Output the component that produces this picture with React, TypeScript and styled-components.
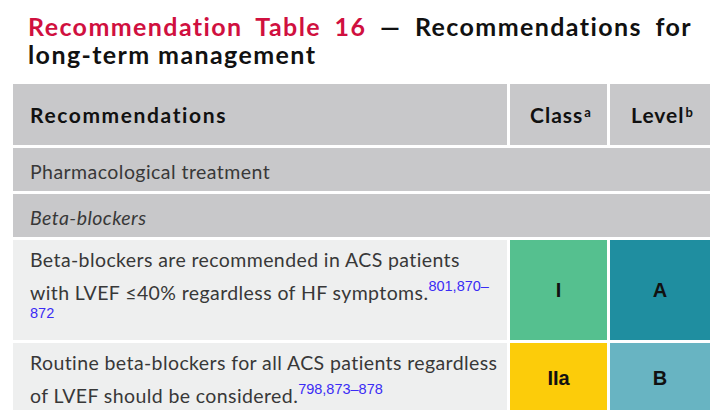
import React from "react";
import styled, { createGlobalStyle } from "styled-components";

const Global = createGlobalStyle`
  html, body { margin: 0; padding: 0; background: #ffffff; }
  body { font-family: "Lato", "Open Sans", sans-serif; }
`;

const Page = styled.div`
  width: 720px;
  height: 410px;
  overflow: hidden;
  background: #fff;
  padding: 12px 0 0 13px;
  box-sizing: border-box;
`;

const Title = styled.h1`
  margin: 0 0 16px 15px;
  width: 664px;
  font-family: "Lato", sans-serif;
  font-weight: 700;
  font-size: 25px;
  letter-spacing: 1.4px;
  line-height: 28px;
  color: #111;
`;

const TitleLine = styled.span<{ $justify?: boolean }>`
  display: block;
  white-space: nowrap;
  text-align: ${(p) => (p.$justify ? "justify" : "left")};
  text-align-last: ${(p) => (p.$justify ? "justify" : "left")};
`;

const Red = styled.span`
  color: #d0103f;
`;

const Grid = styled.div`
  display: grid;
  grid-template-columns: 494px 97px 100px;
  grid-template-rows: 61px 43px 43px 100px 70px;
  column-gap: 3px;
  row-gap: 3px;
  width: 697px;
`;

const HeadCell = styled.div<{ $center?: boolean }>`
  background: #c8c8ca;
  display: flex;
  align-items: center;
  justify-content: ${(p) => (p.$center ? "center" : "flex-start")};
  padding: ${(p) => (p.$center ? "0 0 0 4px" : "0 17px")};
  font-family: "Lato", sans-serif;
  font-weight: 700;
  font-size: 21px;
  letter-spacing: ${(p) => (p.$center ? "1px" : "1.6px")};
  color: #111;
`;

const Sup = styled.span`
  font-size: 13px;
  font-weight: 700;
  letter-spacing: 0;
  align-self: flex-start;
  margin-top: 20px;
  margin-left: 1px;
`;

const Section = styled.div<{ $italic?: boolean }>`
  grid-column: 1 / -1;
  background: #c8c8ca;
  display: flex;
  align-items: center;
  padding: 3px 17px 0 17px;
  font-family: "Lato", sans-serif;
  font-size: 19.5px;
  letter-spacing: 0.45px;
  font-style: ${(p) => (p.$italic ? "italic" : "normal")};
  color: #383838;
`;

const Text = styled.div`
  background: #eeefef;
  padding: 3px 0 0 17px;
  font-family: "Lato", sans-serif;
  font-size: 19.5px;
  letter-spacing: 0.4px;
  line-height: 33px;
  color: #383838;
  white-space: nowrap;
`;

const Ref = styled.sup`
  font-family: "Liberation Sans", Arial, sans-serif;
  font-size: 14.5px;
  letter-spacing: 0;
  color: #3b2cf5;
  line-height: 0;
  vertical-align: 9px;
`;

const RefLine = styled.span`
  display: block;
  font-family: "Liberation Sans", Arial, sans-serif;
  font-size: 14.5px;
  letter-spacing: 0;
  line-height: 14px;
  color: #3b2cf5;
  margin-top: -3px;
`;

const Badge = styled.div<{ $bg: string }>`
  background: ${(p) => p.$bg};
  display: flex;
  align-items: center;
  justify-content: center;
  font-family: "Liberation Sans", Arial, sans-serif;
  font-weight: 700;
  font-size: 20px;
  color: #111;
`;

export default function App() {
  return (
    <Page>
      <Global />
      <Title>
        <TitleLine $justify>
          <Red>Recommendation Table 16</Red> — Recommendations for
        </TitleLine>
        <TitleLine>long-term management</TitleLine>
      </Title>
      <Grid>
        <HeadCell>Recommendations</HeadCell>
        <HeadCell $center>
          Class<Sup>a</Sup>
        </HeadCell>
        <HeadCell $center>
          Level<Sup>b</Sup>
        </HeadCell>
        <Section>Pharmacological treatment</Section>
        <Section $italic>Beta-blockers</Section>
        <Text>
          Beta-blockers are recommended in ACS patients
          <br />
          with LVEF ≤40% regardless of HF symptoms.<Ref>801,870–</Ref>
          <RefLine>872</RefLine>
        </Text>
        <Badge $bg="#55c08f">I</Badge>
        <Badge $bg="#1f8ea0">A</Badge>
        <Text>
          Routine beta-blockers for all ACS patients regardless
          <br />
          of LVEF should be considered.<Ref>798,873–878</Ref>
        </Text>
        <Badge $bg="#fccc0a">IIa</Badge>
        <Badge $bg="#68b4c2">B</Badge>
      </Grid>
    </Page>
  );
}
